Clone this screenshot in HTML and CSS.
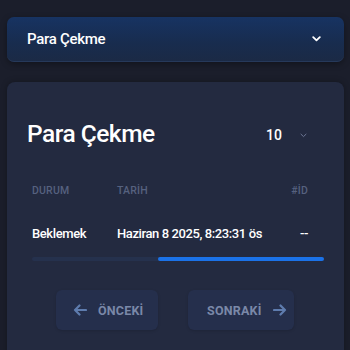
FILE: index.html
```html
<!DOCTYPE html>
<html>
<head>
<meta charset="utf-8">
<link rel="stylesheet" href="styles.css">
</head>
<body>
<div class="select">
  <span class="select-label">Para Çekme</span>
  <svg class="select-chev" width="9" height="6" viewBox="0 0 9 6"><path d="M1.2 1.2 L4.5 4.4 L7.8 1.2" fill="none" stroke="#ffffff" stroke-width="1.8" stroke-linecap="round" stroke-linejoin="round"/></svg>
</div>
<div class="card">
  <div class="card-head">
    <h1 class="title">Para Çekme</h1>
    <div class="per-page">
      <span class="per-num">10</span>
      <svg class="per-chev" width="7" height="5" viewBox="0 0 7 5"><path d="M1 1.2 L3.5 3.6 L6 1.2" fill="none" stroke="#6d7794" stroke-width="1" stroke-linecap="round" stroke-linejoin="round"/></svg>
    </div>
  </div>
  <div class="table">
    <div class="row head">
      <span class="c1">DURUM</span>
      <span class="c2">TARİH</span>
      <span class="c3">#İD</span>
    </div>
    <div class="row data">
      <span class="c1">Beklemek</span>
      <span class="c2">Haziran 8 2025, 8:23:31 ös</span>
      <span class="c3">--</span>
    </div>
    <div class="scroll"><div class="thumb"></div></div>
  </div>
  <div class="pager">
    <button class="btn prev">
      <svg width="14" height="12" viewBox="0 0 14 12"><path d="M13 6 H2 M6.5 1.5 L2 6 L6.5 10.5" fill="none" stroke="#5e7cae" stroke-width="2.2" stroke-linecap="round" stroke-linejoin="round"/></svg>
      <span>ÖNCEKİ</span>
    </button>
    <button class="btn next">
      <span>SONRAKİ</span>
      <svg width="14" height="12" viewBox="0 0 14 12"><path d="M1 6 H12 M7.5 1.5 L12 6 L7.5 10.5" fill="none" stroke="#5e7cae" stroke-width="2.2" stroke-linecap="round" stroke-linejoin="round"/></svg>
    </button>
  </div>
</div>
</body>
</html>
```
FILE: styles.css
```css
html, body {
  margin: 0;
  padding: 0;
  background: #1b1e2b;
  height: 100%;
  overflow: hidden;
}
body {
  padding: 17px 6px 0 7px;
  font-family: Roboto, "Liberation Sans", sans-serif;
  color: #ffffff;
  box-sizing: border-box;
}
.select {
  height: 45px;
  border-radius: 7px;
  background: linear-gradient(180deg, #173362 0%, #182c4e 60%, #1b2a45 100%);
  border-bottom: 1px solid #26395a;
  box-sizing: border-box;
  display: flex;
  align-items: center;
  justify-content: space-between;
  padding: 0 23px 0 20px;
  box-shadow: 0 2px 6px rgba(0,0,0,0.35);
}
.select-label {
  font-size: 15px;
  font-weight: 500;
  letter-spacing: -0.3px;
}
.card {
  margin-top: 20px;
  background: #232a40;
  border-radius: 8px 8px 0 0;
  padding: 37px 20px 20px 20px;
  min-height: 240px;
  box-shadow: 0 0 6px rgba(0,0,0,0.3);
}
.card-head {
  display: flex;
  align-items: center;
  justify-content: space-between;
  height: 30px;
}
.title {
  margin: 0;
  font-size: 24.5px;
  font-weight: 500;
  line-height: 30px;
  letter-spacing: -0.5px;
}
.per-page {
  display: flex;
  align-items: center;
  gap: 18px;
  margin-right: 17px;
  padding-top: 2px;
}
.per-num {
  font-size: 14px;
  font-weight: 500;
}
.table {
  margin: 35px 0 0 0;
  padding: 0 0 0 5px;
}
.row {
  display: flex;
  align-items: center;
}
.c1 { width: 85px; }
.c2 { flex: 1; }
.c3 { text-align: right; margin-right: 16px; }
.head {
  font-size: 10.5px;
  line-height: 14px;
  font-weight: 500;
  color: #56617f;
  letter-spacing: 0.2px;
}
.data {
  margin-top: 27px;
  font-size: 13px;
  line-height: 18px;
  font-weight: 500;
  letter-spacing: -0.4px;
}
.scroll {
  margin-top: 14px;
  height: 4px;
  border-radius: 2px;
  background: #25314d;
  display: flex;
  justify-content: flex-end;
}
.thumb {
  width: 166px;
  height: 4px;
  border-radius: 2px;
  background: #1b72e8;
}
.pager {
  margin-top: 29px;
  display: flex;
  justify-content: center;
  gap: 30px;
  padding-right: 1px;
}
.btn {
  height: 40px;
  border: none;
  border-radius: 6px;
  background: #252f4c;
  display: flex;
  align-items: center;
  gap: 11px;
  font-family: Roboto, sans-serif;
  font-size: 12.5px;
  font-weight: 700;
  color: #7a88a8;
  letter-spacing: 0.2px;
  box-shadow: 0 1px 3px rgba(0,0,0,0.15);
}
.prev { width: 102px; padding: 0 0 0 17px; }
.next { width: 106px; padding: 0 0 0 19px; }
```
